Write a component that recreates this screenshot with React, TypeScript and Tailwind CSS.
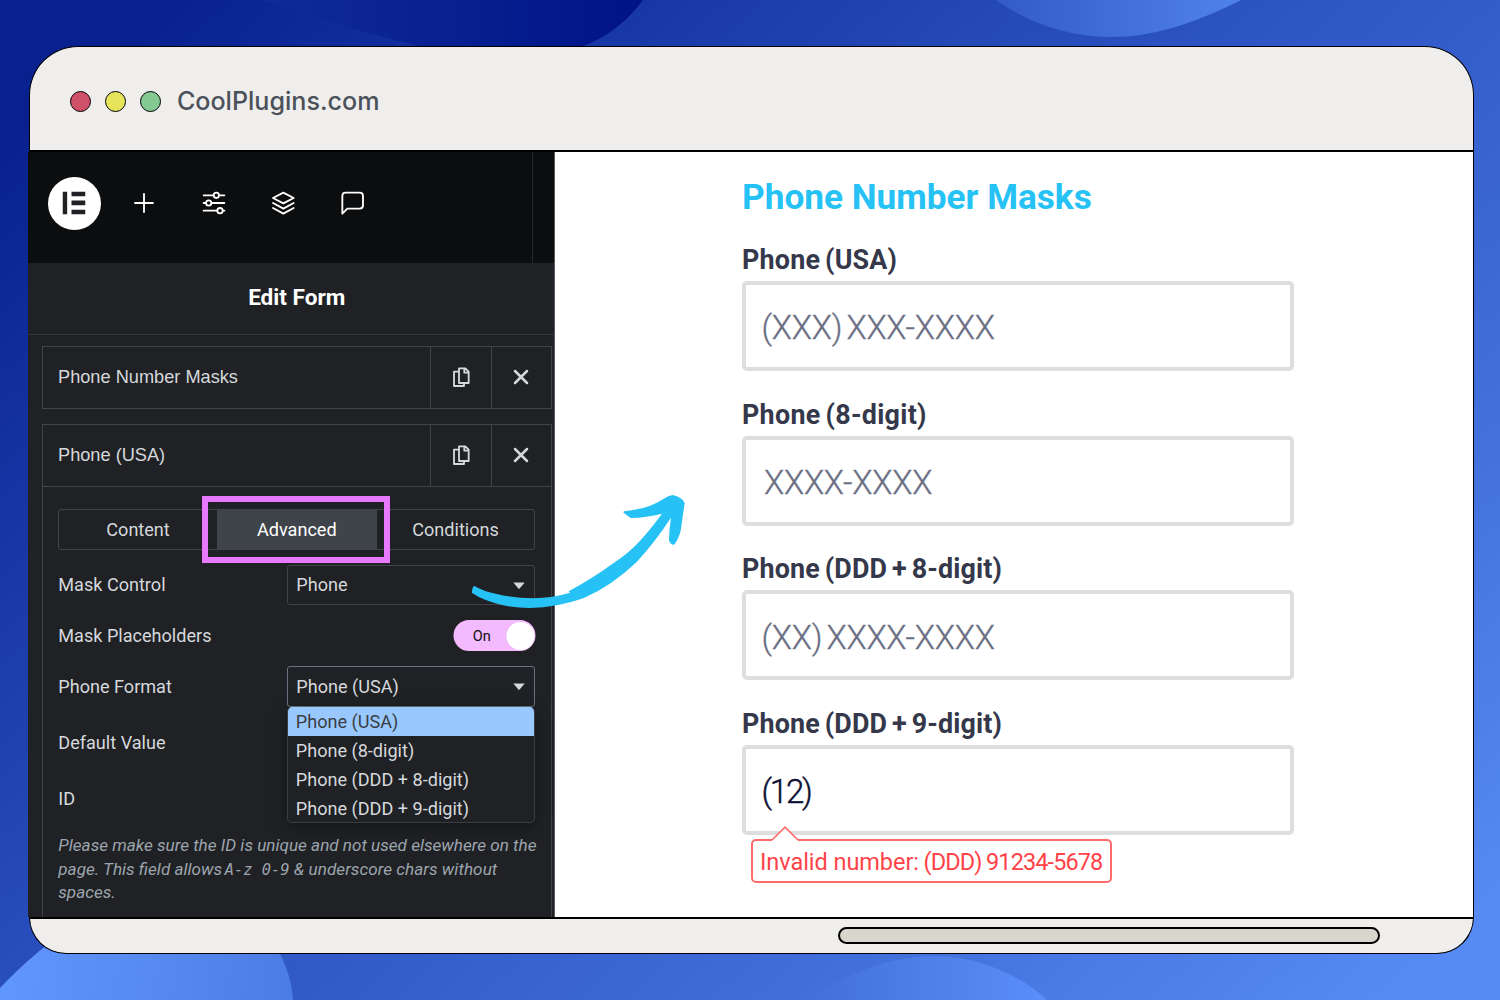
import type { ReactNode } from 'react';

function Backdrop() {
  return (
    <svg className="absolute inset-0 h-[1000px] w-[1500px]" viewBox="0 0 1500 1000" aria-hidden="true">
      <defs>
        <linearGradient id="base" gradientUnits="userSpaceOnUse" x1="100" y1="60" x2="1130" y2="1240">
          <stop offset="0" stopColor="#08218f" />
          <stop offset="0.45" stopColor="#2c53c2" />
          <stop offset="0.75" stopColor="#416fdb" />
          <stop offset="1" stopColor="#568bf5" />
        </linearGradient>
        <linearGradient id="dark" gradientUnits="userSpaceOnUse" x1="270" y1="0" x2="640" y2="0">
          <stop offset="0" stopColor="#0f2a96" />
          <stop offset="0.5" stopColor="#082090" />
          <stop offset="1" stopColor="#001387" />
        </linearGradient>
        <linearGradient id="topBlob" gradientUnits="userSpaceOnUse" x1="996" y1="0" x2="1241" y2="0">
          <stop offset="0" stopColor="#335bc8" />
          <stop offset="1" stopColor="#5082ec" />
        </linearGradient>
        <linearGradient id="leftBlob" gradientUnits="userSpaceOnUse" x1="0" y1="960" x2="293" y2="1000">
          <stop offset="0" stopColor="#6297ff" />
          <stop offset="1" stopColor="#4b7ce6" />
        </linearGradient>
        <linearGradient id="bottomBlob" gradientUnits="userSpaceOnUse" x1="806" y1="0" x2="1047" y2="0">
          <stop offset="0" stopColor="#416fdb" />
          <stop offset="1" stopColor="#5a8ef9" />
        </linearGradient>
      </defs>
      <rect width="1500" height="1000" fill="url(#base)" />
      <path d="M262 0C310 16 370 34 425 48H578C608 38 628 20 643 0Z" fill="url(#dark)" />
      <path d="M996 0C1030 24 1070 37 1112 37C1160 37 1205 18 1241 0Z" fill="url(#topBlob)" />
      <path d="M0 988C25 962 40 950 60 935H270C286 962 292 982 293 1000H0Z" fill="url(#leftBlob)" />
      <path d="M806 1000C850 972 890 956 937 956C980 957 1022 976 1047 1000Z" fill="url(#bottomBlob)" />
    </svg>
  );
}

function CopyIcon() {
  return (
    <svg className="h-[20px] w-[18px] -translate-y-px" viewBox="0 0 54 60" fill="none" stroke="#d5d8dc" strokeWidth="5.5" strokeLinejoin="round">
      <path d="M21 4H40L50 14V48H21ZM37 4V17H50" />
      <path d="M21 14H6V57H36V48" />
    </svg>
  );
}

function CloseIcon() {
  return (
    <svg className="h-[16px] w-[16px] -translate-x-px -translate-y-px" viewBox="0 0 16 16" stroke="#d5d8dc" strokeWidth="2.5" strokeLinecap="round">
      <path d="M2 2L14 14M14 2L2 14" />
    </svg>
  );
}

function ItemHeader({ title }: { title: string }) {
  return (
    <div className="flex h-[61px] items-stretch">
      <div className="flex w-[387px] items-center pl-[15px] font-['Liberation_Sans',sans-serif] text-[18.2px] text-[#d5d8dc]">
        {title}
      </div>
      <div className="flex w-[61px] items-center justify-center border-l border-[#3f444b]"><CopyIcon /></div>
      <div className="flex flex-1 items-center justify-center border-l border-[#3f444b]"><CloseIcon /></div>
    </div>
  );
}

function Row({ label, children, className }: { label: string; children?: ReactNode; className: string }) {
  return (
    <div className={`flex w-[477px] items-center justify-between ${className}`}>
      <span>{label}</span>
      {children}
    </div>
  );
}

function Caret() {
  return (
    <svg className="h-[7px] w-[12px]" viewBox="0 0 12 7" fill="#d5d8dc">
      <path d="M0.3 0.5H11.7L6.6 6.4Q6 7 5.4 6.4Z" />
    </svg>
  );
}

const formats = ['Phone (USA)', 'Phone (8-digit)', 'Phone (DDD + 8-digit)', 'Phone (DDD + 9-digit)'];

function Toolbar() {
  return (
    <div className="flex h-[111px] bg-[#0c0d0e]">
      <div className="flex w-[505px] items-start border-r border-[#26292c] pl-[20px] pt-[25px]">
        <div className="flex h-[52.5px] w-[52.5px] items-center justify-center rounded-full bg-white">
          <svg className="h-[23px] w-[23px] -translate-x-[0.5px] -translate-y-[0.5px]" viewBox="0 0 69 69" fill="#1f2124">
            <path d="M0 0H14V69H0ZM27 0H69V14H27ZM27 27H69V41H27ZM27 55H69V69H27Z" />
          </svg>
        </div>
        <div className="ml-[31.5px] mt-[14px] flex gap-[45.5px] text-white">
          <svg className="h-6 w-6" viewBox="0 0 72 72" fill="none" stroke="currentColor" strokeWidth="5.5" strokeLinecap="round">
            <path d="M36 9V63M9 36H63" />
          </svg>
          <svg className="h-6 w-6" viewBox="0 0 72 72" fill="none" stroke="currentColor" strokeWidth="5.5" strokeLinecap="round">
            <path d="M5 13H34M52 13H67M5 36H11M29 36H67M5 59H45M63 59H67" />
            <circle cx="43" cy="13" r="8" />
            <circle cx="20" cy="36" r="8" />
            <circle cx="54" cy="59" r="8" />
          </svg>
          <svg className="h-6 w-6" viewBox="0 0 72 72" fill="none" stroke="currentColor" strokeWidth="5.5" strokeLinecap="round" strokeLinejoin="round">
            <path d="M37 5L68 21L37 37L6 21ZM6 36L37 53L68 36M6 51L37 68L68 51" />
          </svg>
          <svg className="h-6 w-6" viewBox="0 0 72 72" fill="none" stroke="currentColor" strokeWidth="5.5" strokeLinejoin="round">
            <path d="M4 68V15Q4 5 14 5H56Q66 5 66 15V43Q66 53 56 53H19Z" />
          </svg>
        </div>
      </div>
    </div>
  );
}

function Sidebar() {
  return (
    <div className="relative h-[765px] w-[527px] overflow-hidden border-r border-[#5a5d61] bg-[#1f2124] font-['Roboto',sans-serif] text-[18.08px] text-[#d5d8dc]">
      <Toolbar />
      <div className="flex h-[72px] items-center justify-center border-b border-[#33363a] pl-[11.5px] text-[22.6px] font-bold text-white">
        <span className="-translate-y-px">Edit Form</span>
      </div>
      <div className="ml-[14px] mt-[11px] w-[510px]">
        <div className="border border-[#3f444b]"><ItemHeader title="Phone Number Masks" /></div>
        <div className="mt-[15px] h-[560px] border border-[#3f444b]">
          <div className="border-b border-[#3f444b]"><ItemHeader title="Phone (USA)" /></div>
          <div className="pl-[15.3px]">
            <div className="relative mt-[22px] flex h-[40.5px] w-[477px] rounded-[3px] border border-[#3f444b]">
              <div className="flex w-[157.5px] items-center justify-center">Content</div>
              <div className="flex w-[160px] items-center justify-center bg-[#3f444b] text-white">Advanced</div>
              <div className="flex flex-1 items-center justify-center">Conditions</div>
              <div className="absolute -top-[14px] left-[143px] h-[66.5px] w-[188px] border-[6px] border-[#e879ff]" />
            </div>
            <Row label="Mask Control" className="mt-[15.5px] h-[40px]">
              <div className="flex h-full w-[248px] items-center justify-between rounded-[3px] border border-[#3f444b] pl-[8px] pr-[9px]">
                Phone<Caret />
              </div>
            </Row>
            <Row label="Mask Placeholders" className="mt-[15px] h-[31px]">
              <div className="flex h-[31px] w-[82px] translate-x-[0.5px] items-center justify-between rounded-full bg-[#f3bafd] pl-[19px] pr-[1px] text-[14.5px] text-[#0c0d0e]">
                <span className="translate-y-px">On</span>
                <span className="h-[28px] w-[28px] rounded-full bg-white" />
              </div>
            </Row>
            <Row label="Phone Format" className="mt-[15px] h-[41px]">
              <div className="relative z-10 flex h-full w-[248px] items-center justify-between rounded-[3px] border border-[#69727d] pl-[8px] pr-[9px]">
                Phone (USA)<Caret />
                <ul className="absolute -left-px top-[40px] h-[116px] w-[248px] overflow-hidden rounded-[5px] border border-t-0 border-[#3a3d41] bg-[#1f2124] shadow-[0_4px_16px_rgba(0,0,0,0.35)]">
                  {formats.map((f, i) => (
                    <li
                      key={f}
                      className={
                        i === 0
                          ? 'flex h-[29px] items-center bg-[#99c8ff] pl-[7.5px] text-[#3a3d42]'
                          : 'flex h-[29px] items-center pl-[7.5px]'
                      }
                    >
                      {f}
                    </li>
                  ))}
                </ul>
              </div>
            </Row>
            <Row label="Default Value" className="mt-[15.5px] h-[40px]">
              <div className="h-full w-[248px] rounded-[3px] border border-[#3f444b]" />
            </Row>
            <Row label="ID" className="mt-[16px] h-[40px]">
              <div className="h-full w-[248px] rounded-[3px] border border-[#3f444b]" />
            </Row>
            <p className="mt-[15.5px] w-[490px] text-[17.12px] italic leading-[23.6px] text-[#9da5ae]">
              Please make sure the ID is unique and not used elsewhere on the
              <br />
              page. This field allows{' '}
              <span className="-ml-[1.5px] font-['DejaVu_Sans_Mono',monospace] text-[15.4px] leading-none">A-z 0-9</span>{' '}
              <span className="tracking-[0.05px]">&amp; underscore chars without</span>
              <br />
              spaces.
            </p>
          </div>
        </div>
      </div>
    </div>
  );
}

function Field({ label, labelClass, children }: { label: string; labelClass: string; children: ReactNode }) {
  return (
    <div className="h-[154.7px]">
      <div className={`h-[36px] whitespace-nowrap text-[26.9px] font-bold leading-[34px] text-[#35384a] ${labelClass}`}>{label}</div>
      <div className="relative mt-[2px] flex h-[90px] w-[552px] items-center rounded-[5px] border-4 border-[#dedede] bg-white pl-[15.5px] pt-[4px] text-[33px] font-light text-[#6b6f84]">
        {children}
      </div>
    </div>
  );
}

function Preview() {
  return (
    <div className="flex-1 bg-white pl-[187px] pt-[20px] font-['Roboto',sans-serif]">
      <h1 className="h-[71px] text-[35.2px] font-bold leading-[50px] text-[#27c2f5]">Phone Number Masks</h1>
      <Field label="Phone (USA)" labelClass="tracking-[0.2px] [word-spacing:-2px]">
        <span className="tracking-[-0.25px] [-webkit-text-stroke:0.3px_#6b6f84] [word-spacing:-3.5px]">(XXX) XXX-XXXX</span>
      </Field>
      <Field label="Phone (8-digit)" labelClass="tracking-[0.28px] [word-spacing:-2px]">
        <span className="ml-[2.5px] tracking-[-0.25px] [-webkit-text-stroke:0.3px_#6b6f84]">XXXX-XXXX</span>
      </Field>
      <Field label="Phone (DDD + 8-digit)" labelClass="tracking-[0.15px] [word-spacing:-2px]">
        <span className="tracking-[-0.25px] [-webkit-text-stroke:0.3px_#6b6f84] [word-spacing:-3.5px]">(XX) XXXX-XXXX</span>
      </Field>
      <Field label="Phone (DDD + 9-digit)" labelClass="tracking-[0.15px] [word-spacing:-2px]">
        <span className="tracking-[-2.2px] text-[#0d1033] [-webkit-text-stroke:0.4px_#0d1033]">(12)</span>
        <div className="absolute left-[5px] top-[90px] flex h-[44px] w-[361px] items-center whitespace-pre rounded-[5px] border-2 border-[#ff6b6b] bg-white pl-[7px] pt-[3px] text-[23.5px] font-normal text-[#ff4348]">
          <span className="tracking-[-0.05px]">Invalid number:</span>
          <span className="tracking-[-0.9px] [word-spacing:-0.4px]"> (DDD) 91234-5678</span>
          <svg className="absolute -top-[15px] left-[18px] h-[16px] w-[28px]" viewBox="0 0 28 16">
            <path d="M1 14L14 1.2L27 14V16H1Z" fill="#fff" />
            <path d="M1 14L14 1.2L27 14" fill="none" stroke="#ff6b6b" strokeWidth="1.6" />
          </svg>
        </div>
      </Field>
    </div>
  );
}

function CurvedArrow() {
  return (
    <svg className="absolute left-[450px] top-[480px] h-[150px] w-[260px]" viewBox="0 0 780 450" fill="#27c2f5">
      <path d="M72 317Q64 326 66 339Q100 362 160 376Q200 384 240 384Q320 383 400 355Q485 318 560 246Q615 186 663 113Q657 150 657 182Q661 192 671 195Q684 182 692 152Q698 112 704 69Q696 51 668 45Q655 46 640 57Q600 82 560 88Q540 93 522 94Q518 97 523 100L542 114Q590 113 636 101Q600 150 566 187Q533 222 490 250Q425 297 356 334L360 338Q310 353 250 355Q190 354 140 342Q100 334 72 317Z" />
    </svg>
  );
}

export default function App() {
  return (
    <div className="relative h-[1000px] w-[1500px] overflow-hidden bg-[#2c53c2]">
      <Backdrop />
      <div className="relative flex w-[1474px] flex-col pl-[28px] pt-[46px]">
        <div className="ml-px flex h-[106px] items-center rounded-t-[49px] border border-b-2 border-black bg-[#efeeec] pl-[39.5px] pt-[6px]">
          <div className="flex gap-[14.3px]">
            <span className="h-[21px] w-[21px] rounded-full border-[1.5px] border-black bg-[#d04f69]" />
            <span className="h-[21px] w-[21px] rounded-full border-[1.5px] border-black bg-[#e5e45a]" />
            <span className="h-[21px] w-[21px] rounded-full border-[1.5px] border-black bg-[#84c991]" />
          </div>
          <span className="ml-[15.8px] -translate-y-[0.5px] font-['Inter',sans-serif] text-[25.1px] font-medium text-[#4b5159]">CoolPlugins.com</span>
        </div>
        <div className="flex h-[765px] border-r border-black">
          <Sidebar />
          <Preview />
        </div>
        <div className="ml-px flex h-[36.5px] items-start justify-end rounded-b-[49px] border border-t-2 border-black bg-[#efeeec] pr-[93px] pt-[8px]">
          <div className="h-[17px] w-[542px] rounded-full border-2 border-black bg-[#d8d5cd]" />
        </div>
      </div>
      <CurvedArrow />
    </div>
  );
}
